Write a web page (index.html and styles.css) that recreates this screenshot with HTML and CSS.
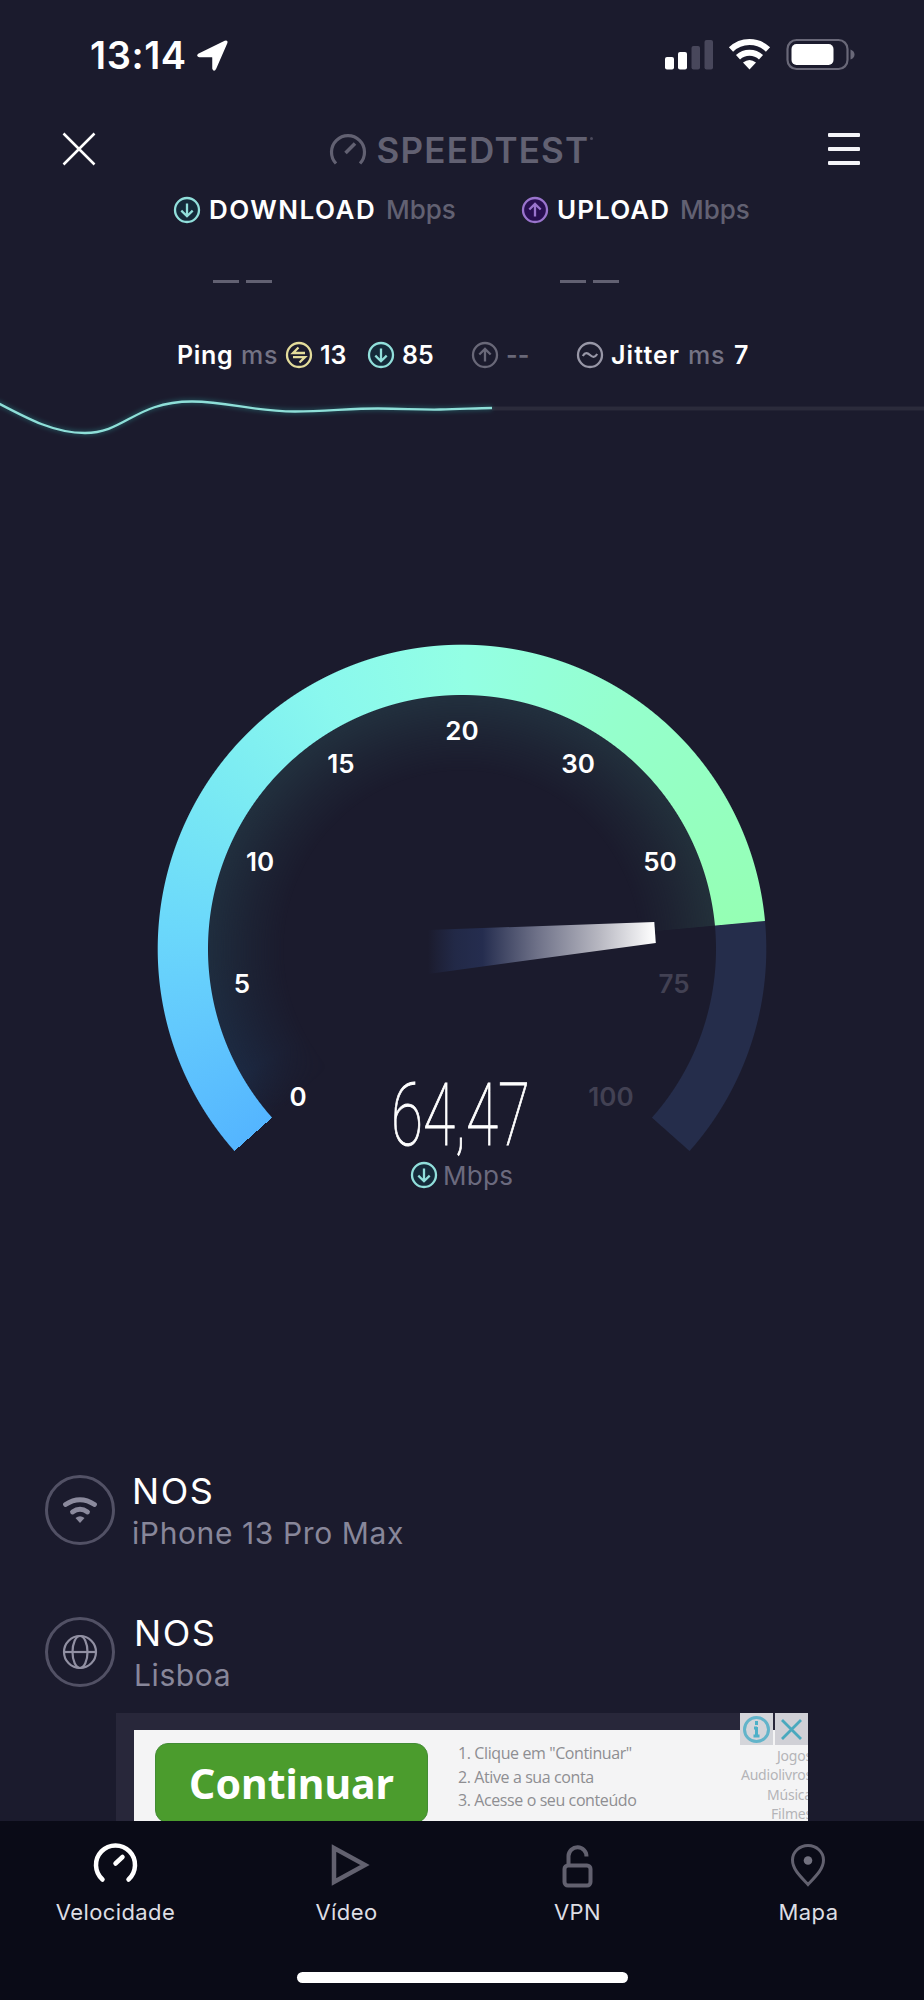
FILE: index.html
```html
<!DOCTYPE html>
<html lang="pt">
<head>
<meta charset="utf-8">
<title>Speedtest</title>
<link rel="stylesheet" href="styles.css">
</head>
<body>
<svg class="defs" width="0" height="0" aria-hidden="true">
  <symbol id="down" viewBox="0 0 28 28"><circle cx="14" cy="14" r="12"/><path d="M14 7.5v12.5M8.3 14.6l5.7 5.6 5.7-5.6"/></symbol>
  <symbol id="up" viewBox="0 0 28 28"><circle cx="14" cy="14" r="12"/><path d="M14 20.500V8M8.300 13.500l5.700-5.600 5.700 5.600"/></symbol>
  <symbol id="swap" viewBox="0 0 28 28"><circle cx="14" cy="14" r="12"/><path d="M13.500 6.500L8 12h12M8 16.200h12l-5.500 5.300"/></symbol>
  <symbol id="wave" viewBox="0 0 28 28"><circle cx="14" cy="14" r="12"/><path d="M6.800 15c2.500-4 4.700-3.200 7.200-1s4.700 3 7.200-1"/></symbol>
</svg>
<div class="screen">
  <div class="statusbar">
    <span class="time">13:14</span>
    <svg class="loc" width="32" height="32" viewBox="0 0 32 32"><path d="M1.500 14.500L28 1.500q2.500-1 1.500 1.700L18.500 28.500q-1.500 3-2.500 0V17.500q0-1-1-1H2.500q-2.500-.5-1-2z" fill="#fff" stroke="#fff" stroke-width="1.500" stroke-linejoin="round"/></svg>
    <svg class="signals" width="192" height="34" viewBox="0 0 192 34">
      <g fill="#fff"><rect x="0" y="19" width="9" height="12.500" rx="2"/><rect x="13" y="14" width="9" height="17.500" rx="2"/></g>
      <g fill="#48475b"><rect x="26.500" y="8" width="8.500" height="23.500" rx="2"/><rect x="39.500" y="2" width="8.500" height="29.500" rx="2"/></g>
      <g fill="none" stroke="#fff" stroke-width="6"><path d="M66 11.500a26.500 26.500 0 0 1 37 0"/><path d="M73 19.300a17 17 0 0 1 23 0"/></g>
      <path d="M78 24.500q6.500-5 13 0L84.500 31.500z" fill="#fff"/>
      <rect x="122.500" y="2" width="60" height="29" rx="9" fill="none" stroke="#696878" stroke-width="2.200"/>
      <rect x="126.500" y="6" width="42" height="21" rx="5" fill="#fff"/>
      <path d="M185.500 11.500q4 1.500 4 5t-4 5z" fill="#696878"/>
    </svg>
  </div>
  <header class="header">
    <svg class="close" width="34" height="34" viewBox="0 0 34 34"><path d="M1.500 1.500l31 31M32.500 1.500l-31 31" stroke="#fff" stroke-width="2.500"/></svg>
    <div class="brand">
      <svg width="38" height="34" viewBox="0 0 38 34" fill="none" stroke="#626172" stroke-width="3.200"><path d="M7 31.500a16.500 16.500 0 1 1 24 0"/><path d="M16.500 21L26 11.500" stroke-width="3.600"/></svg>
      <span class="brand-name">SPEEDTEST</span><span class="brand-dot"></span>
    </div>
    <div class="menu"><i></i><i></i><i></i></div>
  </header>
  <div class="results">
    <div class="result">
      <div class="label"><svg class="ic teal"><use href="#down"/></svg><b class="w-down">DOWNLOAD</b><span class="unit">Mbps</span></div>
      <div class="blank"><i></i><i></i></div>
    </div>
    <div class="result">
      <div class="label"><svg class="ic violet"><use href="#up"/></svg><b class="w-up">UPLOAD</b><span class="unit">Mbps</span></div>
      <div class="blank"><i></i><i></i></div>
    </div>
  </div>
  <div class="latency">
    <b class="w-ping">Ping</b><span class="w-ms">ms</span>
    <svg class="ic yellow"><use href="#swap"/></svg><b class="w-13">13</b>
    <svg class="ic teal"><use href="#down"/></svg><b class="w-85">85</b>
    <svg class="ic grey"><use href="#up"/></svg><b class="w-none">--</b>
    <svg class="ic light"><use href="#wave"/></svg><b class="w-jitter">Jitter</b><span class="w-ms2">ms</span><b>7</b>
  </div>
  <svg class="chart" width="924" height="80" viewBox="0 0 924 80">
    <path d="M492 28.500H924" stroke="#2b2b3b" stroke-width="4"/>
    <g fill="none" stroke="#2c7f83">
      <path class="chart-glow" d="M-4 22C30 40 55 53 85 53C125 53 135 21.500 192 21.500C230 21.500 250 31.500 295 31.500C325 31.500 350 28.500 378 28.500C405 28.500 415 29.800 440 29.500C460 29.500 475 28 492 28"/>
      <path d="M-4 22C30 40 55 53 85 53C125 53 135 21.500 192 21.500C230 21.500 250 31.500 295 31.500C325 31.500 350 28.500 378 28.500C405 28.500 415 29.800 440 29.500C460 29.500 475 28 492 28" stroke="#8edfd8" stroke-width="2.300"/>
    </g>
  </svg>
  <div class="gauge">
    <div class="glow"></div>
    <div class="band"></div>
    <svg class="dial" width="610" height="560" viewBox="157 644 610 560">
      <defs><linearGradient id="needle" gradientUnits="userSpaceOnUse" x1="428" y1="0" x2="655" y2="0">
        <stop offset="0" stop-color="#232b4b" stop-opacity="0"/><stop offset=".12" stop-color="#222947"/><stop offset=".24" stop-color="#252d4f"/><stop offset=".48" stop-color="#6e7188"/><stop offset=".75" stop-color="#b6b6c0"/><stop offset="1" stop-color="#fff"/></linearGradient></defs>
      <path d="M428 930L654.300 922 655.800 943 428 974z" fill="url(#needle)"/>
      <g class="ticks">
        <text x="462" y="740">20</text><text x="341" y="773">15</text><text x="578" y="773">30</text>
        <text x="260" y="871">10</text><text x="660" y="871">50</text><text x="242" y="993">5</text><text x="298" y="1106">0</text>
        <g class="dim"><text x="674" y="993">75</text><text x="611" y="1106">100</text></g>
      </g>
      <text class="value" x="391" y="1145" textLength="139" lengthAdjust="spacingAndGlyphs">64,47</text>
      <svg class="teal" x="410" y="1161" width="28" height="28"><use href="#down"/></svg>
      <text class="value-unit" x="443" y="1185" textLength="70">Mbps</text>
    </svg>
  </div>
  <div class="hosts">
    <div class="host">
      <span class="ring"><svg width="36" height="28" viewBox="0 0 36 28"><g fill="none" stroke="#8b8a9d" stroke-width="4.800" stroke-linecap="round"><path d="M3.500 8.500q14.500-9.500 29 0"/><path d="M10.500 16q7.500-5.500 15 0"/></g><path d="M13.500 22q4.500-3.500 9 0L18 27z" fill="#8b8a9d"/></svg></span>
      <div><div class="isp">NOS</div><div class="device">iPhone 13 Pro Max</div></div>
    </div>
    <div class="host second">
      <span class="ring"><svg width="36" height="36" viewBox="0 0 36 36" fill="none" stroke="#9190a2" stroke-width="2.200"><circle cx="18" cy="18" r="16"/><ellipse cx="18" cy="18" rx="7.500" ry="16"/><path d="M2 18h32"/></svg></span>
      <div><div class="isp">NOS</div><div class="device">Lisboa</div></div>
    </div>
  </div>
  <div class="ad">
    <div class="creative">
      <div class="cta">Continuar</div>
      <ol class="steps"><li>1. Clique em "Continuar"</li><li>2. Ative a sua conta</li><li>3. Acesse o seu conteúdo</li></ol>
      <ul class="kinds"><li>Jogos</li><li>Audiolivros</li><li>Música</li><li>Filmes</li></ul>
    </div>
    <div class="choices">
      <svg width="33" height="32" viewBox="0 0 33 32"><rect width="33" height="32" fill="#d4d5da"/><circle cx="16.500" cy="16.500" r="12" fill="none" stroke="#62b4ca" stroke-width="3"/><path d="M16.500 8v4M16.500 14v9.500M14 15h3M13.500 23h6" fill="none" stroke="#4db0c8" stroke-width="3"/></svg>
      <svg width="33" height="32" viewBox="0 0 33 32"><rect width="33" height="32" fill="#d0d0d6"/><path d="M7 7l19 19M26 7L7 26" stroke="#4aa9be" stroke-width="2.800"/></svg>
    </div>
  </div>
  <nav class="tabs">
    <div class="tab"><svg width="46" height="46" viewBox="0 0 46 46" fill="none" stroke="#fff" stroke-width="4.500" stroke-linecap="round"><path d="M9.500 37.500a19.500 19.500 0 1 1 26 0"/><path d="M22.500 21.500l7-6.500"/></svg><span>Velocidade</span></div>
    <div class="tab"><svg width="46" height="46" viewBox="0 0 46 46" fill="none" stroke="#62616f" stroke-width="4.500"><path d="M10 6v34L41 23z"/></svg><span>Vídeo</span></div>
    <div class="tab"><svg width="46" height="46" viewBox="0 0 46 46" fill="none" stroke="#62616f" stroke-width="4"><rect x="9.500" y="23.500" width="26" height="20" rx="3.500"/><path d="M13.500 23V14a9 9 0 0 1 18 .5"/></svg><span>VPN</span></div>
    <div class="tab"><svg width="46" height="46" viewBox="0 0 46 46"><path d="M22 42.500C14 34 6.500 27 6.500 18a15.500 14.500 0 0 1 31 0C37.500 27 30 34 22 42.500z" fill="none" stroke="#62616f" stroke-width="3"/><circle cx="22" cy="18.500" r="4.300" fill="#72717f"/></svg><span>Mapa</span></div>
    <div class="home"></div>
  </nav>
</div>
</body>
</html>
```

FILE: styles.css
```css
* { box-sizing: border-box; }
body { margin: 0; background: #1b1b2d; }
.defs { position: absolute; }
.screen { width: 924px; height: 2000px; overflow: hidden; display: flex; flex-direction: column; background: #1b1b2d; color: #fff; font-family: Inter, "Liberation Sans", sans-serif; }
.screen svg { flex: none; }
b { font-weight: 600; }

.statusbar { height: 110px; padding: 38px 67px 0 90px; display: flex; align-items: flex-start; }
.time { font-size: 38px; line-height: 34px; font-weight: 600; width: 107px; letter-spacing: 0.6px; }
.loc { margin-top: 2px; }
.signals { margin-left: auto; }

.header { height: 82px; padding: 22px 64px 0 62px; display: flex; justify-content: space-between; align-items: flex-start; }
.brand { display: flex; align-items: flex-start; color: #626172; margin-left: -3px; }
.brand-name { margin-left: 10px; margin-top: 1px; font-size: 35px; line-height: 34px; font-weight: 600; letter-spacing: 1.2px; width: 212px; white-space: nowrap; }
.brand-dot { width: 3px; height: 3px; margin: 5px 0 0 1px; background: #4b4a5c; border-radius: 50%; }
.menu { width: 32px; padding-top: 1px; display: flex; flex-direction: column; gap: 10px; }
.menu i { height: 4px; background: #f4f4f8; border-radius: 1px; }

.ic { width: 28px; height: 28px; }
.ic, .teal { fill: none; stroke-width: 2.3; }
.teal { stroke: #91dfdb; fill: #152a3a; }
.violet { stroke: #9a74cd; fill: #280f50; }
.yellow { stroke: #e3dc9b; }
.grey { stroke: #696878; }
.light { stroke: #9897a7; }
#down path, #up path, #swap path, #wave path { fill: none; }

.results { height: 136px; padding-left: 173px; display: flex; }
.result { width: 347px; padding-top: 3px; }
.label { display: flex; align-items: center; height: 29px; font-size: 26px; }
.label b { margin-left: 8px; }
.label .unit { color: #626172; font-weight: 500; }
.w-down { width: 177px; letter-spacing: 1.5px; }
.w-up { width: 123px; letter-spacing: 1.1px; }
.result + .result .label { padding-left: 1px; }
.blank { display: flex; gap: 7px; padding: 56px 0 0 40px; }
.blank i { width: 26px; height: 3px; background: #626172; }

.latency { height: 52px; padding-bottom: 1px; padding-left: 177px; padding-top: 3px; display: flex; align-items: center; font-size: 25px; color: #fff; }
.latency span { color: #747384; font-weight: 500; }
.latency .ic + b { margin-left: 7px; }
.w-ping { width: 64px; letter-spacing: 0.7px; }
.w-ms { width: 44px; letter-spacing: 0.8px; }
.w-13 { width: 47px; }
.w-85 { width: 69px; }
.latency .w-none { width: 71px; margin-left: 5px; color: #696878; }
.latency .w-jitter { width: 77px; letter-spacing: 1.1px; margin-left: 5px; }
.w-ms2 { width: 46px; letter-spacing: 0.8px; }
.latency .light { margin-left: -1px; }

.chart { display: block; }
.chart-glow { stroke-width: 5; opacity: .45; filter: blur(2px); }

.gauge { width: 610px; height: 560px; margin: 184px 0 0 157px; flex: none; display: grid; }
.gauge > * { grid-area: 1 / 1; }
.dial { z-index: 1; }
.band, .glow { width: 610px; height: 610px; }
.band {
  background: conic-gradient(from 228.4deg at 305px 305px, #54b5ff 0deg, #62c8fd 25deg, #6bd8fb 46deg, #7aeaf3 75deg, #8af8ee 103deg, #93ffe4 132deg, #95ffcd 165deg, #95ffb4 216.2deg, #252d4b 216.4deg, #252d4b 263.1deg, transparent 263.3deg);
  -webkit-mask: radial-gradient(circle at 305px 305px, transparent 253.500px, #000 254.500px, #000 303.800px, transparent 304.800px);
  mask: radial-gradient(circle at 305px 305px, transparent 253.500px, #000 254.500px, #000 303.800px, transparent 304.800px);
}
.glow {
  background: conic-gradient(from 228.4deg at 305px 305px, rgba(28,35,69,0) 0deg, #1c2942 12deg, #1f2d3e 40deg, #22303e 80deg, #22303e 150deg, #23303a 216.2deg, transparent 216.4deg);
  -webkit-mask: radial-gradient(circle at 305px 305px, transparent 178px, rgba(0,0,0,.4) 212px, #000 253px, transparent 255px);
  mask: radial-gradient(circle at 305px 305px, transparent 178px, rgba(0,0,0,.4) 212px, #000 253px, transparent 255px);
}
.ticks { fill: #fff; font-size: 26px; font-weight: 600; text-anchor: middle; }
.dim { fill: #424153; }
.value { fill: #fff; stroke: #fff; stroke-width: 0.9; font-family: Roboto, sans-serif; font-size: 87px; font-weight: 100; }
.value-unit { fill: #6b6a7e; font-size: 26px; }

.hosts { padding: 271px 0 0 45px; height: 509px; }
.host { display: flex; gap: 17px; height: 142px; }
.ring { width: 70px; height: 70px; border: 3px solid #525165; border-radius: 50%; display: flex; align-items: center; justify-content: center; }
.isp { font-size: 36px; font-weight: 400; line-height: 36px; margin-top: -2px; letter-spacing: 1.6px; }
.device { font-size: 30px; font-weight: 400; line-height: 36px; color: #88879a; margin-top: 6px; white-space: nowrap; letter-spacing: 0.6px; }
.second { gap: 19px; }

.ad { width: 692px; height: 108px; margin-left: 116px; flex: none; background: #28273a; padding: 17px 0 0 18px; position: relative; overflow: hidden; font-family: "Noto Sans", sans-serif; }
.creative { height: 92px; background: #f4f4f5; display: flex; overflow: hidden; padding-left: 21px; }
.cta { width: 273px; height: 80px; margin-top: 13px; border-radius: 13px; background: #4b9c2d; border: 1px solid #438c35; font-size: 41px; font-weight: 700; line-height: 79px; text-align: center; flex: none; }
ol, ul { list-style: none; margin: 0; padding: 0; }
.steps { margin: 12px 0 0 30px; font-family: "Open Sans", sans-serif; font-size: 16px; line-height: 23.700px; color: #8e8e92; width: 220px; white-space: nowrap; letter-spacing: -0.4px; }
.kinds { margin: 16px -4px 0 auto; font-size: 14px; line-height: 19.300px; text-align: right; color: #b4b4b8; letter-spacing: -0.2px; }
.choices { position: absolute; right: 0; top: 0; display: flex; gap: 2px; }

.tabs { height: 179px; flex: none; background: #0a0b17; display: grid; grid-template-columns: repeat(4, 1fr); grid-template-rows: 151px 28px; }
.tab { display: flex; flex-direction: column; align-items: center; padding-top: 21px; font-size: 22px; line-height: 28px; color: #dedee4; }
.tab span { margin-top: 10px; letter-spacing: 0.4px; }
.home { grid-column: 1 / 5; width: 331px; height: 11px; border-radius: 6px; background: #fff; margin-left: 297px; }
```
